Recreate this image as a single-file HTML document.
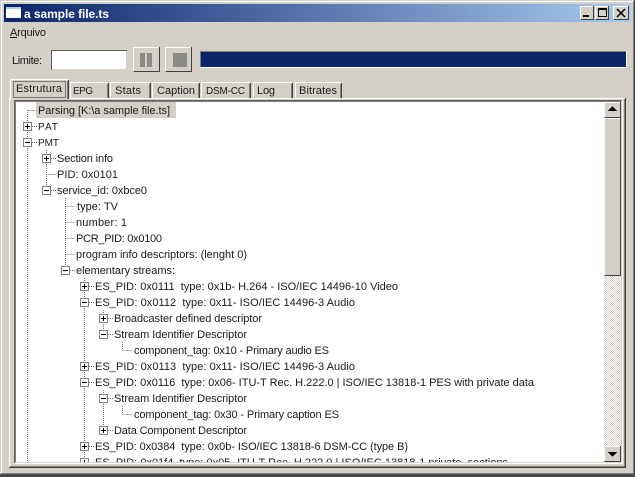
<!DOCTYPE html>
<html><head><meta charset="utf-8"><style>
html,body{margin:0;padding:0;width:635px;height:477px;overflow:hidden;background:#d4d0c8}
svg{display:block}
text{font-family:"Liberation Sans",sans-serif;font-size:11px;fill:#1a1a1a;white-space:pre}
.n{font-size:10px}
.d{stroke:#707070;stroke-width:1;stroke-dasharray:1 1;fill:none}
.b{fill:#fff;stroke:#808080;stroke-width:1}
.g{stroke:#000;stroke-width:1;fill:none}
</style></head><body>
<svg width="635" height="477" viewBox="0 0 635 477" xmlns="http://www.w3.org/2000/svg" shape-rendering="crispEdges">
<defs>
<linearGradient id="t" x1="0" x2="1" y1="0" y2="0"><stop offset="0" stop-color="#0a246a"/><stop offset="1" stop-color="#a6caf0"/></linearGradient>
<pattern id="dither" width="2" height="2" patternUnits="userSpaceOnUse"><rect width="2" height="2" fill="#fff"/><rect width="1" height="1" fill="#d4d0c8"/><rect x="1" y="1" width="1" height="1" fill="#d4d0c8"/></pattern>
<clipPath id="tc"><rect x="15" y="101" width="589" height="361"/></clipPath>
</defs>
<!-- window frame -->
<rect width="635" height="477" fill="#d4d0c8"/>
<rect x="1" y="1" width="633" height="1" fill="#fff"/>
<rect x="1" y="1" width="1" height="473" fill="#fff"/>
<rect x="633" y="1" width="1" height="474" fill="#808080"/>
<rect x="1" y="473" width="633" height="1" fill="#808080"/>
<rect x="0" y="474" width="635" height="3" fill="#4a4a4a"/>
<rect x="634" y="0" width="1" height="477" fill="#404040"/>
<!-- title bar -->
<rect x="4" y="4" width="627" height="18" fill="url(#t)"/>
<rect x="6" y="7" width="15" height="11" fill="#fff"/>
<rect x="6" y="7" width="15" height="2" fill="#a6caf0"/>
<text x="24" y="18" style="font-weight:bold;font-size:12px;fill:#fff" textLength="85" lengthAdjust="spacing">a sample file.ts</text>
<!-- caption buttons -->
<g>
<rect x="580" y="6" width="14" height="14" fill="#d4d0c8"/><path d="M580 6.500h14M580.500 6v14" stroke="#fff" fill="none"/><path d="M580.500 19.500h13.500M593.500 6v14" stroke="#404040" fill="none"/>
<rect x="583" y="15" width="6" height="2" fill="#000"/>
<rect x="595" y="6" width="14" height="14" fill="#d4d0c8"/><path d="M595 6.500h14M595.500 6v14" stroke="#fff" fill="none"/><path d="M595.500 19.500h13.500M608.500 6v14" stroke="#404040" fill="none"/>
<rect x="598.500" y="8.500" width="8" height="8" fill="none" stroke="#000"/><rect x="598" y="8" width="9" height="2" fill="#000"/>
<rect x="613" y="6" width="16" height="14" fill="#d4d0c8"/><path d="M613 6.500h16M613.500 6v14" stroke="#fff" fill="none"/><path d="M613.500 19.500h15.500M628.500 6v14" stroke="#404040" fill="none"/>
<path d="M617 9l8 8M625 9l-8 8" stroke="#000" stroke-width="1.500" fill="none" shape-rendering="auto"/>
</g>
<!-- menu -->
<text x="10" y="36" textLength="36" lengthAdjust="spacing">Arquivo</text>
<rect x="10" y="37" width="7" height="1" fill="#1a1a1a"/>
<!-- toolbar -->
<text x="12" y="64" textLength="30" lengthAdjust="spacing">Limite:</text>
<rect x="52" y="50" width="75" height="20" fill="#fff"/>
<path d="M51.500 70V50.500H127" stroke="#5a5a5a" fill="none"/><path d="M52.500 69.500H126.500V51" stroke="#d4d0c8" fill="none"/>
<g>
<rect x="133" y="47" width="27" height="25" fill="#d4d0c8"/>
<path d="M133.500 72V47.500H160" stroke="#fff" fill="none"/><path d="M133.500 71.500H159.500V47" stroke="#404040" fill="none"/>
<rect x="140" y="53" width="5" height="14" fill="#8a8a88"/><rect x="147" y="53" width="5" height="14" fill="#8a8a88"/>
<rect x="165" y="47" width="27" height="25" fill="#d4d0c8"/>
<path d="M165.500 72V47.500H192" stroke="#fff" fill="none"/><path d="M165.500 71.500H191.500V47" stroke="#404040" fill="none"/>
<rect x="173" y="53" width="14" height="14" fill="#8a8a88"/>
</g>
<!-- progress -->
<rect x="200" y="51" width="427" height="17" fill="#fff"/>
<rect x="200" y="51" width="426" height="1" fill="#808080"/>
<rect x="200" y="51" width="1" height="16" fill="#808080"/>
<rect x="201" y="52" width="425" height="15" fill="#0a246a"/>
<!-- tab panel -->
<rect x="9" y="98" width="1" height="370" fill="#fff"/>
<rect x="9" y="98" width="617" height="1" fill="#fff"/>
<rect x="625" y="98" width="1" height="370" fill="#404040"/>
<rect x="624" y="99" width="1" height="368" fill="#808080"/>
<rect x="9" y="467" width="617" height="1" fill="#404040"/>
<rect x="10" y="466" width="615" height="1" fill="#808080"/>
<!-- tabs -->
<g fill="none">
<path d="M70.500 98V82.500H108" stroke="#fff"/><path d="M108.500 83V98" stroke="#404040"/><path d="M107.500 84V98" stroke="#808080"/>
<path d="M110.500 98V82.500H150" stroke="#fff"/><path d="M150.500 83V98" stroke="#404040"/><path d="M149.500 84V98" stroke="#808080"/>
<path d="M152.500 98V82.500H199" stroke="#fff"/><path d="M199.500 83V98" stroke="#404040"/><path d="M198.500 84V98" stroke="#808080"/>
<path d="M201.500 98V82.500H250" stroke="#fff"/><path d="M250.500 83V98" stroke="#404040"/><path d="M249.500 84V98" stroke="#808080"/>
<path d="M253.500 98V82.500H292" stroke="#fff"/><path d="M292.500 83V98" stroke="#404040"/><path d="M291.500 84V98" stroke="#808080"/>
<path d="M295.500 98V82.500H341" stroke="#fff"/><path d="M341.500 83V98" stroke="#404040"/><path d="M340.500 84V98" stroke="#808080"/>
<rect x="10" y="79" width="59" height="21" fill="#d4d0c8"/>
<path d="M10.500 100V79.500H68" stroke="#fff"/><path d="M68.500 80V99" stroke="#404040"/><path d="M67.500 81V99" stroke="#808080"/>
<rect x="13.500" y="81.500" width="52" height="16" stroke="#222" stroke-dasharray="1 1"/>
</g>
<text x="16" y="92" textLength="46" lengthAdjust="spacing">Estrutura</text>
<text x="73" y="94" class="n" textLength="20" lengthAdjust="spacing">EPG</text>
<text x="115" y="94" textLength="26" lengthAdjust="spacing">Stats</text>
<text x="157" y="94" textLength="38" lengthAdjust="spacing">Caption</text>
<text x="206" y="94" class="n" textLength="39" lengthAdjust="spacing">DSM-CC</text>
<text x="257" y="94" textLength="18" lengthAdjust="spacing">Log</text>
<text x="299" y="94" textLength="38" lengthAdjust="spacing">Bitrates</text>
<!-- tree view -->
<rect x="14" y="100" width="607" height="363" fill="#fff"/>
<path d="M14.500 463V100.500H622" stroke="#606060" fill="none"/>
<path d="M15.500 462V101.500H621" stroke="#808080" fill="none"/>
<path d="M14 463.500H622.500M622.500 100V464" stroke="#fff" fill="none"/>
<path d="M15 462.500H621.500M621.500 101V463" stroke="#d4d0c8" fill="none"/>
<g clip-path="url(#tc)">
<rect x="36" y="102" width="140" height="16" fill="#d4d0c8"/>
<!-- dotted lines -->
<path class="d" d="M27.500 110V462M46.500 150V190M65.500 198V270M84.500 278V462M103.500 310V334M103.500 390V430M122.500 342V350M122.500 406V414"/>
<path class="d" d="M27.500 110.500H37M32 126.500H37M32 142.500H37M51 158.500H56M46.500 174.500H56M51 190.500H56M65.500 206.500H75M65.500 222.500H75M65.500 238.500H75M65.500 254.500H75M70 270.500H75M89 286.500H94M89 302.500H94M89 366.500H94M89 382.500H94M89 446.500H94M108 318.500H113M108 334.500H113M108 398.500H113M108 430.500H113M122.500 350.500H132M122.500 414.500H132"/>
<!-- expander boxes -->
<g>
<rect class="b" x="23.500" y="122.500" width="8" height="8"/><path class="g" d="M25 126.500h5M27.500 124v5"/>
<rect class="b" x="23.500" y="138.500" width="8" height="8"/><path class="g" d="M25 142.500h5"/>
<rect class="b" x="42.500" y="154.500" width="8" height="8"/><path class="g" d="M44 158.500h5M46.500 156v5"/>
<rect class="b" x="42.500" y="186.500" width="8" height="8"/><path class="g" d="M44 190.500h5"/>
<rect class="b" x="61.500" y="266.500" width="8" height="8"/><path class="g" d="M63 270.500h5"/>
<rect class="b" x="80.500" y="282.500" width="8" height="8"/><path class="g" d="M82 286.500h5M84.500 284v5"/>
<rect class="b" x="80.500" y="298.500" width="8" height="8"/><path class="g" d="M82 302.500h5"/>
<rect class="b" x="99.500" y="314.500" width="8" height="8"/><path class="g" d="M101 318.500h5M103.500 316v5"/>
<rect class="b" x="99.500" y="330.500" width="8" height="8"/><path class="g" d="M101 334.500h5"/>
<rect class="b" x="80.500" y="362.500" width="8" height="8"/><path class="g" d="M82 366.500h5M84.500 364v5"/>
<rect class="b" x="80.500" y="378.500" width="8" height="8"/><path class="g" d="M82 382.500h5"/>
<rect class="b" x="99.500" y="394.500" width="8" height="8"/><path class="g" d="M101 398.500h5"/>
<rect class="b" x="99.500" y="426.500" width="8" height="8"/><path class="g" d="M101 430.500h5M103.500 428v5"/>
<rect class="b" x="80.500" y="442.500" width="8" height="8"/><path class="g" d="M82 446.500h5M84.500 444v5"/>
<rect class="b" x="80.500" y="458.500" width="8" height="8"/><path class="g" d="M82 462.500h5M84.500 460v5"/>
</g>
<!-- labels -->
<text x="38" y="114" textLength="132" lengthAdjust="spacing">Parsing [K:\a sample file.ts]</text>
<text x="38" y="130" class="n" textLength="20" lengthAdjust="spacing">PAT</text>
<text x="38" y="146" class="n" textLength="21" lengthAdjust="spacing">PMT</text>
<text x="57" y="162" textLength="56" lengthAdjust="spacing">Section info</text>
<text x="57" y="178" textLength="61" lengthAdjust="spacing">PID: 0x0101</text>
<text x="57" y="194" textLength="90" lengthAdjust="spacing">service_id: 0xbce0</text>
<text x="77" y="210" textLength="41" lengthAdjust="spacing">type: TV</text>
<text x="76" y="226" textLength="51" lengthAdjust="spacing">number: 1</text>
<text x="76" y="242" textLength="86" lengthAdjust="spacing">PCR_PID: 0x0100</text>
<text x="76" y="258" textLength="171" lengthAdjust="spacing">program info descriptors: (lenght 0)</text>
<text x="76" y="274" textLength="99" lengthAdjust="spacing">elementary streams:</text>
<text x="95" y="290" textLength="303" lengthAdjust="spacing">ES_PID: 0x0111  type: 0x1b- H.264 - ISO/IEC 14496-10 Video</text>
<text x="95" y="306" textLength="260" lengthAdjust="spacing">ES_PID: 0x0112  type: 0x11- ISO/IEC 14496-3 Audio</text>
<text x="114" y="322" textLength="148" lengthAdjust="spacing">Broadcaster defined descriptor</text>
<text x="114" y="338" textLength="133" lengthAdjust="spacing">Stream Identifier Descriptor</text>
<text x="134" y="354" textLength="195" lengthAdjust="spacing">component_tag: 0x10 - Primary audio ES</text>
<text x="95" y="370" textLength="260" lengthAdjust="spacing">ES_PID: 0x0113  type: 0x11- ISO/IEC 14496-3 Audio</text>
<text x="95" y="386" textLength="439" lengthAdjust="spacing">ES_PID: 0x0116  type: 0x06- ITU-T Rec. H.222.0 | ISO/IEC 13818-1 PES with private data</text>
<text x="114" y="402" textLength="133" lengthAdjust="spacing">Stream Identifier Descriptor</text>
<text x="134" y="418" textLength="205" lengthAdjust="spacing">component_tag: 0x30 - Primary caption ES</text>
<text x="114" y="434" textLength="133" lengthAdjust="spacing">Data Component Descriptor</text>
<text x="95" y="450" textLength="313" lengthAdjust="spacing">ES_PID: 0x0384  type: 0x0b- ISO/IEC 13818-6 DSM-CC (type B)</text>
<text x="95" y="466" textLength="413" lengthAdjust="spacing">ES_PID: 0x01f4  type: 0x05- ITU-T Rec. H.222.0 | ISO/IEC 13818-1 private_sections</text>
</g>
<!-- scrollbar -->
<rect x="604" y="102" width="17" height="360" fill="url(#dither)"/>
<g>
<rect x="604" y="102" width="17" height="16" fill="#d4d0c8"/>
<path d="M604.500 118V102.500H621" stroke="#fff" fill="none"/><path d="M604.500 117.500H620.500V102" stroke="#404040" fill="none"/>
<path d="M612.500 106l-4.500 5h9z" fill="#000"/>
<rect x="604" y="118" width="17" height="158" fill="#d4d0c8"/>
<path d="M604.500 276V118.500H621" stroke="#fff" fill="none"/><path d="M604.500 275.500H620.500V118" stroke="#404040" fill="none"/>
<rect x="604" y="446" width="17" height="16" fill="#d4d0c8"/>
<path d="M604.500 462V446.500H621" stroke="#fff" fill="none"/><path d="M604.500 461.500H620.500V446" stroke="#404040" fill="none"/>
<path d="M612.500 457l-4.500 -5h9z" fill="#000"/>
</g>
</svg>
</body></html>
